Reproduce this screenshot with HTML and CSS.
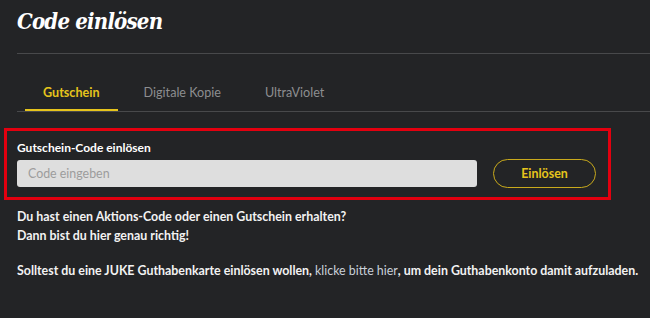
FILE: index.html
```html
<!DOCTYPE html>
<html lang="de">
<head>
<meta charset="utf-8">
<link rel="stylesheet" href="styles.css">
</head>
<body>
<div class="page">
  <h1 class="title">Code einlösen</h1>
  <div class="rule"></div>
  <nav class="tabs">
    <span class="tab active">Gutschein</span>
    <span class="tab">Digitale Kopie</span>
    <span class="tab">UltraViolet</span>
  </nav>
  <div class="redeem">
    <label class="label" for="code">Gutschein-Code einlösen</label>
    <div class="row">
      <input id="code" class="input" type="text" placeholder="Code eingeben">
      <button class="btn">Einlösen</button>
    </div>
  </div>
  <p class="text">Du hast einen Aktions-Code oder einen Gutschein erhalten?<br>Dann bist du hier genau richtig!</p>
  <p class="text second">Solltest du eine JUKE Guthabenkarte einlösen wollen, <a class="link" href="#">klicke bitte hier</a>, um dein Guthabenkonto damit aufzuladen.</p>
</div>
</body>
</html>
```
FILE: styles.css
```css
html, body {
  margin: 0;
  padding: 0;
  background: #232426;
  height: 100%;
}
.page {
  padding: 0 0 0 17px;
  font-family: Lato, "Open Sans", sans-serif;
  color: #f2f2f2;
}
.title {
  margin: 0;
  padding-top: 8px;
  height: 45px;
  box-sizing: border-box;
  font-family: "DejaVu Serif Condensed", "DejaVu Serif", serif;
  font-style: italic;
  font-weight: bold;
  font-size: 22px;
  letter-spacing: -0.8px;
  line-height: 26px;
  color: #ffffff;
}
.rule {
  height: 1px;
  background: #48494b;
  margin-top: 8px;
}
.tabs {
  display: flex;
  margin-top: 31px;
  border-bottom: 1px solid #48494b;
  padding-left: 8px;
}
.tab {
  font-size: 12.6px;
  line-height: 16px;
  padding: 0 18px 10px;
  color: #8d8e90;
  margin-right: 8px;
}
.tab.active {
  color: #e6c41c;
  font-weight: bold;
  box-shadow: inset 0 -2px 0 #e6c41c;
}
.redeem {
  margin: 16px 0 0 -13px;
  width: 607px;
  box-sizing: border-box;
  border: 3px solid #e3000f;
  padding: 9px 0 9px 10px;
}
.label {
  display: block;
  font-size: 12px;
  font-weight: bold;
  line-height: 16px;
  color: #ffffff;
}
.row {
  display: flex;
  align-items: center;
  margin-top: 3px;
}
.input {
  width: 460px;
  height: 27px;
  box-sizing: border-box;
  border: none;
  border-radius: 3px;
  background: #dedede;
  padding: 0 11px;
  font-family: Lato, sans-serif;
  font-size: 12.4px;
  color: #333;
}
.input::placeholder {
  color: #9c9c9c;
}
.btn {
  margin-left: 16px;
  width: 103px;
  height: 29px;
  border: 1px solid #c9aa1c;
  border-radius: 15px;
  background: transparent;
  color: #e6c41c;
  font-family: Lato, sans-serif;
  font-weight: bold;
  font-size: 12.4px;
}
.text {
  margin: 0;
  font-size: 12.4px;
  font-weight: bold;
  line-height: 19px;
  color: #f2f2f2;
}
.redeem + .text {
  margin-top: 7px;
}
.second {
  margin-top: 16px;
}
.link {
  color: #c9d0d9;
  font-weight: normal;
  text-decoration: none;
}
```
